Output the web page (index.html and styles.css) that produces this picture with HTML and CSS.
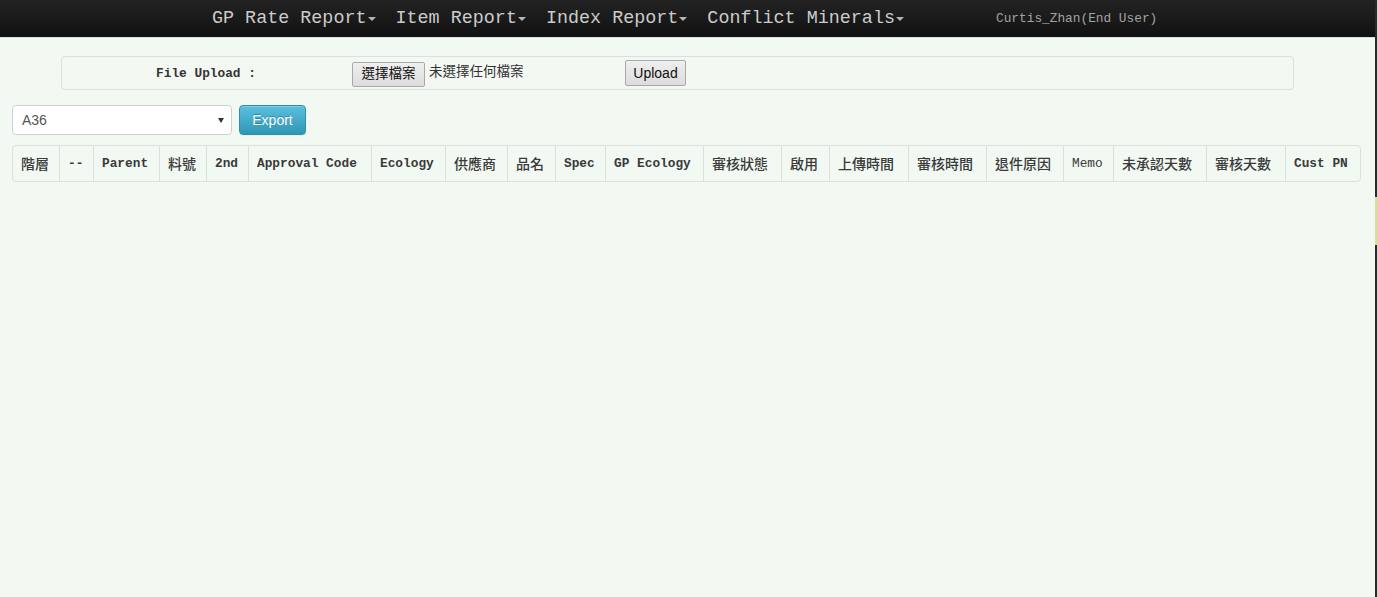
FILE: index.html
```html
<!DOCTYPE html>
<html lang="zh-Hant">
<head>
<meta charset="utf-8">
<title>Report</title>
<link rel="stylesheet" href="styles.css">
</head>
<body>
<header class="navbar">
  <nav class="nav">
    <a class="nav-link">GP Rate Report<span class="caret"></span></a>
    <a class="nav-link">Item Report<span class="caret"></span></a>
    <a class="nav-link">Index Report<span class="caret"></span></a>
    <a class="nav-link">Conflict Minerals<span class="caret"></span></a>
  </nav>
  <div class="user">Curtis_Zhan(End User)</div>
</header>

<main class="page">
  <div class="well">
    <div class="upload-label">File Upload :</div>
    <div class="file-field">
      <button class="btn-native file-btn" type="button">選擇檔案</button>
      <span class="file-name">未選擇任何檔案</span>
    </div>
    <button class="btn-native upload-btn" type="button">Upload</button>
  </div>

  <div class="toolbar">
    <div class="select-wrap">
      <select class="select"><option>A36</option></select>
    </div>
    <button class="btn-info" type="button">Export</button>
  </div>

  <table class="grid">
    <thead>
      <tr>
        <th class="zh">階層</th>
        <th>--</th>
        <th>Parent</th>
        <th class="zh">料號</th>
        <th>2nd</th>
        <th>Approval Code</th>
        <th>Ecology</th>
        <th class="zh">供應商</th>
        <th class="zh">品名</th>
        <th>Spec</th>
        <th>GP Ecology</th>
        <th class="zh">審核狀態</th>
        <th class="zh">啟用</th>
        <th class="zh">上傳時間</th>
        <th class="zh">審核時間</th>
        <th class="zh">退件原因</th>
        <th class="light">Memo</th>
        <th class="zh">未承認天數</th>
        <th class="zh">審核天數</th>
        <th>Cust PN</th>
      </tr>
    </thead>
  </table>
</main>
<div class="edge"><div class="edge-mark"></div></div>
</body>
</html>
```

FILE: styles.css
```css
* { box-sizing: border-box; }

html, body {
  margin: 0;
  padding: 0;
}

body {
  background: #f2f8f2;
  color: #333;
  font-family: "Liberation Mono", "Noto Sans CJK TC", monospace;
  font-size: 13px;
  width: 1377px;
  height: 597px;
  overflow: hidden;
}

/* ---------- navbar ---------- */
.navbar {
  height: 38px;
  background: linear-gradient(to bottom, #232323, #111111);
  border-bottom: 1px solid #d9dfd9;
  display: flex;
  align-items: center;
  padding-left: 202px;
}

.nav {
  display: flex;
  align-items: center;
}

.nav-link {
  font-family: "Liberation Mono", monospace;
  font-size: 18.4px;
  color: #cbcbcb;
  padding: 0 10px;
  display: flex;
  align-items: center;
  line-height: 34px;
}

.caret {
  display: inline-block;
  width: 0;
  height: 0;
  margin-left: 1px;
  margin-top: 1px;
  border-top: 4px solid #b5b5b5;
  border-left: 4px solid transparent;
  border-right: 4px solid transparent;
}

.user {
  margin-left: 82px;
  font-family: "Liberation Mono", monospace;
  font-size: 12.8px;
  color: #a3a3a3;
  line-height: 34px;
}

/* ---------- page ---------- */
.page {
  padding: 18px 16px 0 12px;
}

.well {
  margin-left: 49px;
  width: 1233px;
  height: 34px;
  border: 1px solid #dcdfdc;
  border-radius: 4px;
  background: #f3f8f3;
  display: flex;
  align-items: center;
}

.upload-label {
  width: 290px;
  text-align: center;
  font-weight: bold;
  font-size: 12.8px;
  color: #333;
  padding-right: 2px;
}

.file-field {
  display: flex;
  align-items: flex-start;
  width: 273px;
}

.btn-native {
  font-family: "Liberation Sans", "Noto Sans CJK TC", sans-serif;
  font-size: 14px;
  color: #111;
  background: linear-gradient(to bottom, #efefef, #dcdcdc);
  border: 1px solid #a9a9a9;
  border-radius: 2px;
  height: 25px;
  padding: 0 6px;
  line-height: 22px;
}

.file-btn {
  width: 73px;
  margin-top: 2px;
  padding: 0;
  font-size: 13.5px;
}

.file-name {
  font-family: "Noto Sans CJK TC", sans-serif;
  font-size: 13.5px;
  color: #333;
  margin-left: 4px;
  line-height: 20px;
  margin-top: 0;
}

.upload-btn {
  width: 61px;
  height: 26px;
  padding: 0;
  margin-top: -1px;
}

/* ---------- toolbar ---------- */
.toolbar {
  display: flex;
  align-items: center;
  gap: 7px;
  margin-top: 15px;
}

.select-wrap {
  position: relative;
  width: 220px;
  height: 30px;
}

.select-wrap::after {
  content: "";
  position: absolute;
  right: 8px;
  top: 13px;
  border-top: 5px solid #333;
  border-left: 3px solid transparent;
  border-right: 3px solid transparent;
}

.select {
  appearance: none;
  -webkit-appearance: none;
  width: 220px;
  height: 30px;
  border: 1px solid #cfcfcf;
  border-radius: 4px;
  background: #fff;
  font-family: "Liberation Sans", sans-serif;
  font-size: 14px;
  color: #555;
  padding: 0 9px;
}

.btn-info {
  width: 67px;
  height: 30px;
  border: 1px solid #2f8fae;
  border-radius: 4px;
  background: linear-gradient(to bottom, #5bc0de, #2f96b4);
  color: #fff;
  font-family: "Liberation Sans", sans-serif;
  font-size: 14px;
  text-shadow: 0 -1px 0 rgba(0, 0, 0, 0.25);
  box-shadow: inset 0 1px 0 rgba(255, 255, 255, 0.2), 0 1px 2px rgba(0, 0, 0, 0.05);
  padding: 0;
}

/* ---------- table ---------- */
.grid {
  margin-top: 10px;
  width: 1349px;
  table-layout: fixed;
  border-collapse: separate;
  border-spacing: 0;
  border: 1px solid #dcdfdc;
  border-radius: 4px;
}

.grid th {
  text-align: left;
  padding: 8px 0 8px 8px;
  height: 35px;
  line-height: 19px;
  font-size: 12.8px;
  font-weight: bold;
  color: #3a3a3a;
  border-left: 1px solid #dcdfdc;
  white-space: nowrap;
  overflow: hidden;
}

.grid th:first-child { border-left: 0; }

.grid th.zh {
  font-family: "Noto Sans CJK TC", sans-serif;
  font-size: 14px;
  font-weight: 500;
}

.grid th.light { font-weight: normal; }

.grid th:nth-child(1) { width: 46px; }
.grid th:nth-child(2) { width: 34px; }
.grid th:nth-child(3) { width: 66px; }
.grid th:nth-child(4) { width: 47px; }
.grid th:nth-child(5) { width: 42px; }
.grid th:nth-child(6) { width: 123px; }
.grid th:nth-child(7) { width: 74px; }
.grid th:nth-child(8) { width: 62px; }
.grid th:nth-child(9) { width: 48px; }
.grid th:nth-child(10) { width: 50px; }
.grid th:nth-child(11) { width: 98px; }
.grid th:nth-child(12) { width: 78px; }
.grid th:nth-child(13) { width: 48px; }
.grid th:nth-child(14) { width: 79px; }
.grid th:nth-child(15) { width: 78px; }
.grid th:nth-child(16) { width: 77px; }
.grid th:nth-child(17) { width: 50px; }
.grid th:nth-child(18) { width: 93px; }
.grid th:nth-child(19) { width: 79px; }
.grid th:nth-child(20) { width: 75px; }

/* right window edge artifact */
.edge {
  position: fixed;
  top: 0;
  right: 0;
  width: 2px;
  height: 597px;
  background: #2a2a2a;
}

.edge-mark {
  margin-top: 197px;
  height: 48px;
  background: #dcdc9a;
}
```
